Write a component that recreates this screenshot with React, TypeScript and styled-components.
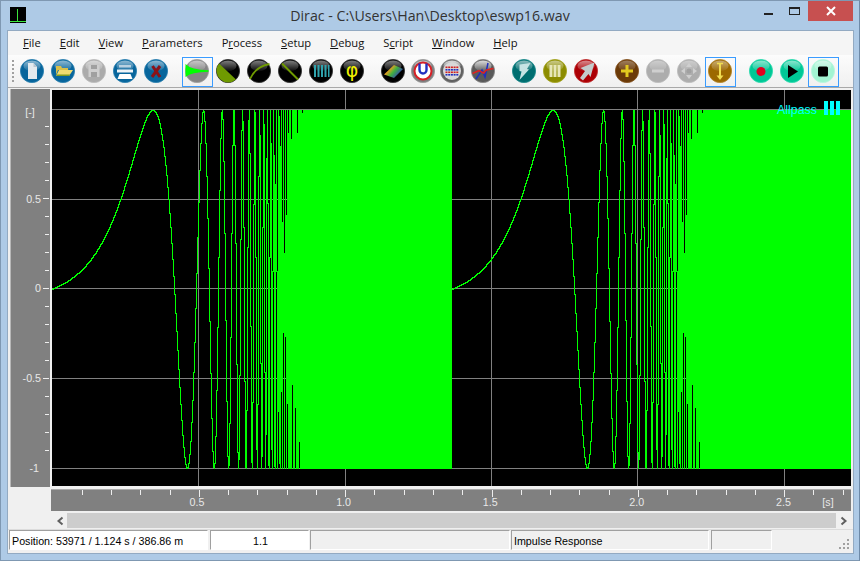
import React, { useMemo } from "react";
import styled, { createGlobalStyle } from "styled-components";

const GlobalStyle = createGlobalStyle`
  html, body {
    margin: 0;
    padding: 0;
    overflow: hidden;
    background: #aecae6;
  }
`;

const Frame = styled.div`
  width: 860px;
  height: 561px;
  box-sizing: border-box;
  display: flex;
  flex-direction: column;
  background: #aecae6;
  border: 1px solid #7f98b2;
  border-right-color: #6e8aa8;
`;

const TitleBar = styled.header`
  height: 30px;
  display: grid;
  grid-template-columns: 1fr auto 1fr;
  align-items: start;
  flex: none;
`;

const AppLogo = styled.div`
  width: 16px;
  height: 16px;
  margin: 6px 0 0 9px;
`;

const TitleText = styled.div`
  font-family: "Open Sans", sans-serif;
  font-size: 14.2px;
  line-height: 20px;
  margin-top: 5px;
  color: #333;
  white-space: nowrap;
`;

const WindowControls = styled.div`
  justify-self: end;
  display: flex;
  margin-right: 6px;
`;

const MinButton = styled.div`
  width: 26px;
  height: 20px;
  display: flex;
  justify-content: center;
  align-items: flex-start;
  &::after {
    content: "";
    width: 9px;
    height: 2px;
    margin-top: 12px;
    background: #222;
  }
`;

const MaxButton = styled.div`
  width: 27px;
  height: 20px;
  display: flex;
  justify-content: center;
  align-items: flex-start;
  &::after {
    content: "";
    width: 11px;
    height: 8px;
    box-sizing: border-box;
    margin-top: 6px;
    border: 1px solid #222;
    border-top-width: 2px;
  }
`;

const CloseButton = styled.div`
  width: 45px;
  height: 20px;
  background: #c75050;
  display: flex;
  justify-content: center;
  align-items: center;
`;

const Client = styled.main`
  flex: 1;
  margin: 0 6px 7px 7px;
  background: #f0f0f0;
  display: flex;
  flex-direction: column;
  min-height: 0;
  outline: 1px solid #93aac2;
`;

const MenuBar = styled.nav`
  height: 24px;
  flex: none;
  box-sizing: border-box;
  display: flex;
  align-items: center;
  gap: 19px;
  padding: 0 0 2px 15px;
  background: #f5f5f5;
  font-family: "Open Sans", sans-serif;
  font-size: 11.2px;
  color: #111;
`;

const MenuItem = styled.span`
  white-space: nowrap;
`;

const Accel = styled.span`
  text-decoration: underline;
`;

const Toolbar = styled.div`
  height: 33px;
  flex: none;
  box-sizing: border-box;
  display: flex;
  align-items: flex-start;
  padding-top: 2px;
  background: linear-gradient(#fcfcfc, #f0f0f0);
  border-bottom: 1px solid #a8a8a8;
`;

const Gripper = styled.div`
  width: 2px;
  height: 22px;
  margin: 3px 3px 0 4px;
  background-image: linear-gradient(#a0a0a0 50%, transparent 50%);
  background-size: 2px 4px;
`;

const ToolButton = styled.div<{ $active?: boolean; $before?: number }>`
  width: 31px;
  height: 30px;
  flex: none;
  box-sizing: border-box;
  padding: 1px 0 0 2px;
  margin-left: ${(p) => p.$before ?? 0}px;
  border: 1px solid ${(p) => (p.$active ? "#3a9cff" : "transparent")};
  line-height: 0;
`;

const ChartGrid = styled.section`
  display: grid;
  grid-template-columns: 39px 1fr;
  grid-template-rows: 398px 22px;
  column-gap: 3px;
  row-gap: 1px;
  margin-top: 1px;
  padding: 0 2px 0 3px;
  flex: none;
`;

const LeftAxis = styled.div`
  background: #808080;
  line-height: 0;
  border-left: 1px solid #b8b8b8;
  margin-left: -1px;
`;

const PlotArea = styled.div`
  position: relative;
  background: #000;
  height: 396px;
  margin-top: 1px;
  margin-left: -1px;
  line-height: 0;
`;

const AllpassTag = styled.div`
  position: absolute;
  top: 11px;
  right: 11px;
  display: flex;
  align-items: flex-start;
  gap: 7px;
  font-family: "Liberation Sans", Arial, sans-serif;
  font-size: 12.4px;
  line-height: 18px;
  color: #00ffff;
`;

const AllpassBars = styled.div`
  display: flex;
  gap: 2px;
  height: 14px;
`;

const AllpassBar = styled.div`
  width: 4px;
  background: #00ffff;
`;

const AxisCorner = styled.div`
  background: transparent;
`;

const BottomAxis = styled.div`
  background: #808080;
  height: 22px;
  margin-left: -2px;
  line-height: 0;
  border-top: 1px solid #aaa;
  box-sizing: border-box;
  margin-top: 1px;
`;

const ScrollBar = styled.div`
  height: 15px;
  flex: none;
  display: flex;
  margin: 3px 2px 0 44px;
`;

const ScrollArrow = styled.div`
  width: 15px;
  display: flex;
  align-items: center;
  justify-content: center;
  background: #f0f0f0;
`;

const ScrollTrack = styled.div`
  flex: 1;
  background: #cdcdcd;
`;

const StatusBar = styled.footer`
  margin-top: 1px;
  height: 22px;
  flex: none;
  box-sizing: border-box;
  display: flex;
  gap: 1px;
  padding-left: 1px;
  border-top: 1px solid #dcdcdc;
  position: relative;
  font-family: "Liberation Sans", Arial, sans-serif;
  font-size: 10.7px;
  color: #000;
`;

const StatusPanel = styled.div<{ $width: number; $white?: boolean; $center?: boolean; $before?: number }>`
  width: ${(p) => p.$width}px;
  height: 20px;
  box-sizing: border-box;
  line-height: 20px;
  padding-left: 2px;
  margin-left: ${(p) => p.$before ?? 0}px;
  white-space: nowrap;
  text-align: ${(p) => (p.$center ? "center" : "left")};
  background: ${(p) => (p.$white ? "#fff" : "#f0f0f0")};
  border-top: 1px solid #a0a0a0;
  border-left: 1px solid #a0a0a0;
  border-right: 1px solid #fff;
  border-bottom: 1px solid #fff;
`;

const SizeGrip = styled.svg`
  position: absolute;
  right: 3px;
  bottom: 1px;
`;

const PLOT_W = 799;
const PERIOD = 400;
const SAMPLES_PER_PX = 164;
const PX_PER_S = 292.6;

const phase = (x: number) => 0.0694 * (Math.exp(x / 32) - 1);

// min/max of the sweep per pixel column, same as a wave editor draws it
function buildWave() {
  let d = "";
  let last = 0;
  for (let col = 0; col < PLOT_W; col++) {
    if (col % PERIOD === 0) last = 0;
    const local = col % PERIOD;
    let lo = last;
    let hi = last;
    for (let s = 0; s < SAMPLES_PER_PX; s++) {
      const v = Math.sin(phase(local + s / SAMPLES_PER_PX));
      if (v < lo) lo = v;
      if (v > hi) hi = v;
      last = v;
    }
    const top = Math.round(199 - hi * 179);
    const bottom = Math.round(199 - lo * 179);
    d += `M${col + 0.5} ${top}V${bottom + 1}`;
  }
  return d;
}

const GRID_X = [146.5, 293.5, 439.5, 585.5, 732.5];
const GRID_Y = [19.5, 109.5, 198.5, 288.5, 378.5];

const Plot = () => {
  const wave = useMemo(buildWave, []);
  return (
    <svg width={PLOT_W} height={396} shapeRendering="crispEdges">
      {GRID_X.map((x) => (
        <line key={x} x1={x} x2={x} y1={0} y2={396} stroke="#808080" />
      ))}
      {GRID_Y.map((y) => (
        <line key={y} x1={0} x2={PLOT_W} y1={y} y2={y} stroke="#808080" />
      ))}
      <path d={wave} stroke="#00ff00" fill="none" />
    </svg>
  );
};

const axisText = {
  fontFamily: '"Liberation Sans", Arial, sans-serif',
  fontSize: 10.7,
  fill: "#e8e8e8",
};

const LEFT_LABELS: [string, number][] = [
  ["0.5", 110],
  ["0", 199],
  ["-0.5", 289],
  ["-1", 379],
];

const LeftScale = () => {
  const ticks = [];
  for (let i = 1; i <= 19; i++) {
    const y = Math.round(19.5 + i * 17.95) + 0.5;
    const major = i % 5 === 0;
    ticks.push(<line key={i} x1={major ? 32 : 34} x2={38} y1={y} y2={y} stroke="#eee" />);
  }
  return (
    <svg width={38} height={398}>
      <g shapeRendering="crispEdges">{ticks}</g>
      <text {...axisText} x={19} y={27} textAnchor="middle">
        [-]
      </text>
      {LEFT_LABELS.map(([t, y]) => (
        <text key={t} {...axisText} x={t === "-1" ? 28 : 30} y={y + 4} textAnchor="end">
          {t}
        </text>
      ))}
    </svg>
  );
};

const BottomScale = () => {
  const ticks = [];
  for (let i = 1; i <= 27; i++) {
    const x = Math.round(1.6 + (i * PX_PER_S) / 10) + 0.5;
    ticks.push(<line key={i} x1={x} x2={x} y1={0} y2={i % 5 === 0 ? 7 : 5} stroke="#eee" />);
  }
  return (
    <svg width={800} height={21}>
      <g shapeRendering="crispEdges">{ticks}</g>
      {["0.5", "1.0", "1.5", "2.0", "2.5"].map((t, i) => (
        <text key={t} {...axisText} x={146 + i * 146.6} y={16} textAnchor="middle">
          {t}
        </text>
      ))}
      <text {...axisText} x={777} y={16} textAnchor="middle">
        [s]
      </text>
    </svg>
  );
};

type OrbProps = {
  name: string;
  color: string;
  ring?: string;
  shine?: number;
  children?: React.ReactNode;
};

const Orb = ({ name, color, ring, shine = 0.55, children }: OrbProps) => (
  <svg width={24} height={24} viewBox="0 0 24 24">
    <defs>
      <linearGradient id={`gloss-${name}`} x1="0" y1="0" x2="0" y2="1">
        <stop offset="0" stopColor="#fff" stopOpacity={shine} />
        <stop offset="1" stopColor="#fff" stopOpacity={0.04} />
      </linearGradient>
    </defs>
    <circle cx={12} cy={12} r={11.6} fill={color} stroke={ring ?? "none"} strokeWidth={0.8} />
    <ellipse cx={12} cy={6.8} rx={8.6} ry={5.4} fill={`url(#gloss-${name})`} />
    {children}
  </svg>
);

const BLUE = "#07659c";
const BLACK = "#000";
const OLIVE = "#6f9a00";
const MINT = "#00c896";

const NewIcon = () => (
  <Orb name="new" color={BLUE} ring="#2a80b0">
    <path d="M8 4h5.500L17 8v12H8z" fill="#e4eaee" />
    <path d="M13.500 4L17 8h-3.500z" fill="#b8c6d0" />
  </Orb>
);
const OpenIcon = () => (
  <Orb name="open" color={BLUE} ring="#2a80b0">
    <path d="M5 7h5l1 2h6v2H7l-2 5z" fill="#d9c04a" />
    <path d="M5 17l3-6h14l-4 6z" fill="#f0dc70" />
    <path d="M5 17h13l1-1.500H6z" fill="#7f9a20" />
  </Orb>
);
const SaveIcon = () => (
  <Orb name="save" color="#ababab" ring="#bdbdbd">
    <path d="M6.500 6h11v12h-11z" fill="#cfcfcf" />
    <path d="M9 6h6v4H9zM9 13h6v5H9z" fill="#a0a0a0" />
  </Orb>
);
const PrintIcon = () => (
  <Orb name="print" color={BLUE} ring="#2a80b0">
    <path d="M6 6h12v2.500H6z" fill="#b8d0e0" />
    <path d="M4 10.500h16v3H4z" fill="#eef4f8" />
    <path d="M6.500 15h11l2 5h-15z" fill="#fff" />
  </Orb>
);
const CloseDocIcon = () => (
  <Orb name="closedoc" color={BLUE} ring="#2a80b0">
    <path d="M8.500 7l7.500 11M16 7l-8 11" stroke="#8a1218" strokeWidth={3} fill="none" />
  </Orb>
);
const EnvelopeIcon = () => (
  <Orb name="env" color="#858585" ring="#a0a0a0">
    <path d="M.5 5Q6 11 23.500 11.300v1.400Q6 13 .5 18z" fill="#00ff00" />
  </Orb>
);
const SplitIcon = () => (
  <Orb name="split" color={BLACK} ring="#333" shine={0.5}>
    <path d="M3 4.400L20 20.600A11.800 11.800 0 0 1 3 4.400z" fill={OLIVE} />
  </Orb>
);
const CurveIcon = () => (
  <Orb name="curve" color={BLACK} ring="#333" shine={0.5}>
    <path d="M3 20Q8 8 22.500 5" stroke={OLIVE} strokeWidth={1.8} fill="none" />
  </Orb>
);
const SlopeIcon = () => (
  <Orb name="slope" color={BLACK} ring="#333" shine={0.5}>
    <path d="M4 4.500L20 20.500" stroke={OLIVE} strokeWidth={2} fill="none" />
  </Orb>
);
const BarsIcon = () => (
  <Orb name="bars" color={BLACK} ring="#333" shine={0.5}>
    <path d="M5 6h2v12H5zM8.500 6h2v12h-2zM12 6h2v12h-2zM15.500 6h2v12h-2zM19 6h1.500v12H19z" fill="#2fa3ad" />
  </Orb>
);
const PhiIcon = () => (
  <Orb name="phi" color={BLACK} ring="#333" shine={0.5}>
    <text x={12} y={17.5} textAnchor="middle" fontFamily="DejaVu Sans, sans-serif" fontSize={19} fill="#f2f000">
      φ
    </text>
  </Orb>
);
const SpectrumIcon = () => (
  <Orb name="spec" color={BLACK} ring="#333" shine={0.5}>
    <defs>
      <linearGradient id="rainbow" x1="0" y1="0" x2="1" y2="0.6">
        <stop offset="0" stopColor="#e02020" />
        <stop offset="0.35" stopColor="#e8a020" />
        <stop offset="0.6" stopColor="#40b040" />
        <stop offset="1" stopColor="#3030d0" />
      </linearGradient>
    </defs>
    <path d="M3 15.500L13 6l9 4-9 9z" fill="url(#rainbow)" />
  </Orb>
);
const TargetIcon = () => (
  <Orb name="target" color="#7d7d7d" ring="#999">
    <circle cx={12} cy={12} r={8.500} fill="#fff" stroke="#d81f26" strokeWidth={2} />
    <path d="M8.500 4.500V11a3.500 3.500 0 0 0 7 0V4.500" stroke="#2030c0" strokeWidth={2.400} fill="none" />
  </Orb>
);

const MATRIX_COLORS = ["#d02020", "#2030c0", "#d02020", "#2030c0"];
const MatrixIcon = () => (
  <Orb name="matrix" color="#606060" ring="#888" shine={0.8}>
    <circle cx={12} cy={12} r={9} fill="#d8d8d8" />
    {MATRIX_COLORS.map((fill, row) =>
      [0, 1, 2, 3, 4].map((col) => (
        <rect key={`${row}-${col}`} x={5.500 + col * 2.700} y={7.500 + row * 2.500} width={2} height={1.600} fill={fill} />
      ))
    )}
  </Orb>
);
const WaveIcon = () => (
  <Orb name="wave" color="#5a5a5a" ring="#888" shine={0.8}>
    <path d="M5 20L11 11l3 7 3-14" stroke="#2030c0" strokeWidth={1.500} fill="none" />
    <path d="M1.500 14.500L8 11.500l4.500 2.500 3-3 7-1.500" stroke="#e02020" strokeWidth={1.500} fill="none" />
  </Orb>
);
const BoltIcon = () => (
  <Orb name="bolt" color="#006e70" ring="#1b8a8c">
    <path d="M7.500 5.500L18.500 4l-3.500 6 2 .5-9.500 10.500 2-8.500-2-.5z" fill="#c6e4e4" />
  </Orb>
);
const TripleIcon = () => (
  <Orb name="triple" color="#8c8c00" ring="#a5a520">
    <path d="M6.500 6h3v12h-3zM10.500 6h3v12h-3zM14.500 6h3v12h-3z" fill="#e6e6b8" />
  </Orb>
);
const ArrowIcon = () => (
  <Orb name="arrow" color="#ac0005" ring="#c03030">
    <path d="M20.500 3.500L6.500 9l4.500 3-5 7 3 2.500 5.500-6.500 2 3z" fill="#c4cccc" />
  </Orb>
);
const PlusIcon = () => (
  <Orb name="plus" color="#6b3a08" ring="#85531f" shine={0.35}>
    <path d="M12 6v12M6 12h12" stroke="#e2c91f" strokeWidth={3} fill="none" />
  </Orb>
);
const MinusIcon = () => (
  <Orb name="minus" color="#adadad" ring="#bdbdbd" shine={0.4}>
    <path d="M6 12h12" stroke="#cfcfcf" strokeWidth={3} fill="none" />
  </Orb>
);
const MoveIcon = () => (
  <Orb name="move" color="#adadad" ring="#bdbdbd" shine={0.4}>
    <circle cx={12} cy={12} r={2.500} fill="#a0a0a0" />
    <path d="M12 4l3 4h-6zM12 20l3-4h-6zM4 12l4-3v6zM20 12l-4-3v6z" fill="#cfcfcf" />
  </Orb>
);
const RangeIcon = () => (
  <Orb name="range" color="#9c6800" ring="#b28428" shine={0.45}>
    <path d="M12 5v13" stroke="#f0dc50" strokeWidth={2} fill="none" />
    <path d="M9 4.500h6" stroke="#f0dc50" strokeWidth={1.500} fill="none" />
    <path d="M8.500 16.500h7L12 21z" fill="#f0dc50" />
  </Orb>
);
const RecordIcon = () => (
  <Orb name="rec" color={MINT} ring="#30dcb0">
    <circle cx={12} cy={12.500} r={4.500} fill="#e00020" />
  </Orb>
);
const PlayIcon = () => (
  <Orb name="play" color={MINT} ring="#30dcb0">
    <path d="M8 6l10 6.500L8 19z" fill="#000" />
  </Orb>
);
const StopIcon = () => (
  <Orb name="stop" color="#a2f4d2" ring="#b8f8de">
    <rect x={7} y={7.500} width={10} height={10} rx={1.500} fill="#000" />
  </Orb>
);

type ToolDef = { Icon: React.FC; before?: number; active?: boolean };

const TOOLS: ToolDef[] = [
  { Icon: NewIcon },
  { Icon: OpenIcon },
  { Icon: SaveIcon },
  { Icon: PrintIcon },
  { Icon: CloseDocIcon },
  { Icon: EnvelopeIcon, before: 10, active: true },
  { Icon: SplitIcon },
  { Icon: CurveIcon },
  { Icon: SlopeIcon },
  { Icon: BarsIcon },
  { Icon: PhiIcon },
  { Icon: SpectrumIcon, before: 10 },
  { Icon: TargetIcon, before: -1 },
  { Icon: MatrixIcon, before: -2 },
  { Icon: WaveIcon },
  { Icon: BoltIcon, before: 10 },
  { Icon: TripleIcon },
  { Icon: ArrowIcon },
  { Icon: PlusIcon, before: 10 },
  { Icon: MinusIcon },
  { Icon: MoveIcon },
  { Icon: RangeIcon, active: true },
  { Icon: RecordIcon, before: 10 },
  { Icon: PlayIcon },
  { Icon: StopIcon, active: true },
];

const MENU: [string, string, string][] = [
  ["", "F", "ile"],
  ["", "E", "dit"],
  ["", "V", "iew"],
  ["", "P", "arameters"],
  ["P", "r", "ocess"],
  ["", "S", "etup"],
  ["", "D", "ebug"],
  ["S", "c", "ript"],
  ["", "W", "indow"],
  ["", "H", "elp"],
];

export default function App() {
  return (
    <>
      <GlobalStyle />
      <Frame>
        <TitleBar>
          <AppLogo>
            <svg width={16} height={16} shapeRendering="crispEdges">
              <rect width={16} height={16} fill="#000" />
              <path d="M0 14.500H16M7.500 2V15" stroke="#3ce63c" fill="none" />
            </svg>
          </AppLogo>
          <TitleText>Dirac - C:\Users\Han\Desktop\eswp16.wav</TitleText>
          <WindowControls>
            <MinButton />
            <MaxButton />
            <CloseButton>
              <svg width={10} height={10}>
                <path d="M1 1l8 8M9 1l-8 8" stroke="#fff" strokeWidth={2} />
              </svg>
            </CloseButton>
          </WindowControls>
        </TitleBar>
        <Client>
          <MenuBar>
            {MENU.map(([pre, key, rest]) => (
              <MenuItem key={pre + key + rest}>
                {pre}
                <Accel>{key}</Accel>
                {rest}
              </MenuItem>
            ))}
          </MenuBar>
          <Toolbar>
            <Gripper />
            {TOOLS.map(({ Icon, before, active }, i) => (
              <ToolButton key={i} $before={before} $active={active}>
                <Icon />
              </ToolButton>
            ))}
          </Toolbar>
          <ChartGrid>
            <LeftAxis>
              <LeftScale />
            </LeftAxis>
            <PlotArea>
              <Plot />
              <AllpassTag>
                Allpass
                <AllpassBars>
                  <AllpassBar />
                  <AllpassBar />
                  <AllpassBar />
                </AllpassBars>
              </AllpassTag>
            </PlotArea>
            <AxisCorner />
            <BottomAxis>
              <BottomScale />
            </BottomAxis>
          </ChartGrid>
          <ScrollBar>
            <ScrollArrow>
              <svg width={8} height={10}>
                <path d="M6.500 1.500L2.500 5l4 3.500" stroke="#606060" strokeWidth={2} fill="none" />
              </svg>
            </ScrollArrow>
            <ScrollTrack />
            <ScrollArrow>
              <svg width={8} height={10}>
                <path d="M1.500 1.500L5.500 5l-4 3.500" stroke="#606060" strokeWidth={2} fill="none" />
              </svg>
            </ScrollArrow>
          </ScrollBar>
          <StatusBar>
            <StatusPanel $width={199} $white>
              Position: 53971 / 1.124 s / 386.86 m
            </StatusPanel>
            <StatusPanel $width={99} $white $center $before={1}>
              1.1
            </StatusPanel>
            <StatusPanel $width={200} />
            <StatusPanel $width={198}>Impulse Response</StatusPanel>
            <StatusPanel $width={61} $before={1} />
            <SizeGrip width={12} height={12}>
              <path d="M9 1h2v2H9zM5 5h2v2H5zM9 5h2v2H9zM1 9h2v2H1zM5 9h2v2H5zM9 9h2v2H9z" fill="#a0a0a0" />
            </SizeGrip>
          </StatusBar>
        </Client>
      </Frame>
    </>
  );
}
